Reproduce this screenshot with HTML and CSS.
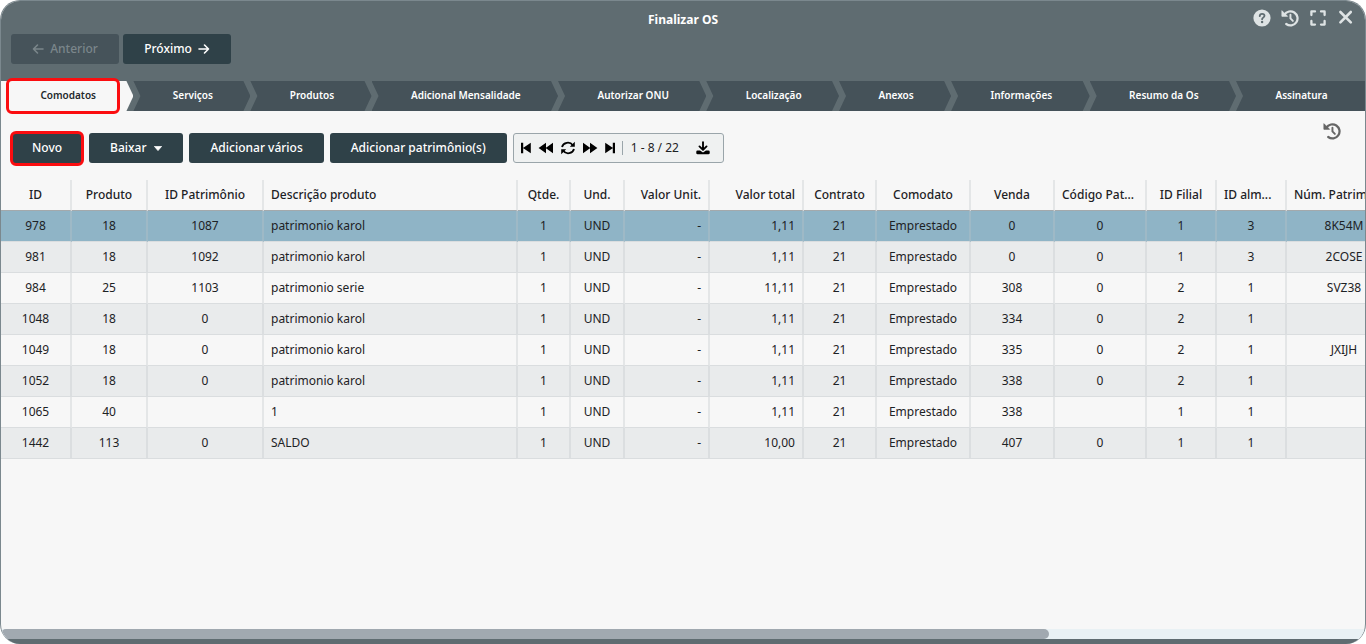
FILE: index.html
```html
<!DOCTYPE html>
<html lang="pt-BR">
<head>
<meta charset="utf-8">
<meta name="viewport" content="width=device-width, initial-scale=1">
<title>Finalizar OS</title>
<link rel="stylesheet" href="styles.css">
</head>
<body>
<svg class="sprite" aria-hidden="true">
  <symbol id="history" viewBox="0 0 24 24"><path d="M4.6 7.6A9.4 9.4 0 1 1 7 20" fill="none" stroke="currentColor" stroke-width="3" stroke-linecap="round"/><path d="M1.2 2.2v7.6h7.6z" fill="currentColor" stroke="currentColor" stroke-linejoin="round"/><path d="M12.6 7.6v5l3.2 3.2" fill="none" stroke="currentColor" stroke-width="2.6" stroke-linecap="round"/></symbol>
</svg>
<main class="window">
  <header class="header">
    <div class="titlebar">
      <h1 class="title">Finalizar OS</h1>
      <div class="window-actions">
        <button class="icon-button" aria-label="Ajuda"><svg class="icon" viewBox="0 0 18 18"><circle cx="9" cy="9" r="8.6" fill="currentColor"/><path d="M6.7 7.1c.1-1.5 1-2.3 2.4-2.3 1.5 0 2.4.8 2.4 2 0 1.8-2.4 1.8-2.4 3.4" fill="none" stroke="#5f6c71" stroke-width="1.8" stroke-linecap="round"/><circle cx="9.1" cy="13" r="1.2" fill="#5f6c71"/></svg></button>
        <button class="icon-button" aria-label="Histórico"><svg class="icon"><use href="#history"/></svg></button>
        <button class="icon-button" aria-label="Tela cheia"><svg class="icon" viewBox="0 0 18 18"><path d="M2.4 6V2.4H6M12 2.4h3.6V6M15.6 12v3.6H12M6 15.6H2.4V12" fill="none" stroke="currentColor" stroke-width="2.3" stroke-linecap="round" stroke-linejoin="round"/></svg></button>
        <button class="icon-button" aria-label="Fechar"><svg class="icon" viewBox="0 0 18 18"><path d="M3.4 3l10.4 10.4M13.8 3L3.4 13.4" stroke="currentColor" stroke-width="2.6" stroke-linecap="round"/></svg></button>
      </div>
    </div>
    <div class="steps-nav">
      <button class="button step-button" disabled><svg class="arrow" viewBox="0 0 12 12"><path d="M11 6H1.5M5.5 2l-4 4 4 4" /></svg>Anterior</button>
      <button class="button step-button">Próximo<svg class="arrow" viewBox="0 0 12 12"><path d="M1 6h9.5M6.5 2l4 4-4 4"/></svg></button>
    </div>
    <nav>
      <ul class="tabs">
        <li class="tab-item tab-item-current"><button class="tab">Comodatos</button></li>
        <li class="tab-item"><button class="tab">Serviços</button></li>
        <li class="tab-item"><button class="tab">Produtos</button></li>
        <li class="tab-item"><button class="tab">Adicional Mensalidade</button></li>
        <li class="tab-item"><button class="tab">Autorizar ONU</button></li>
        <li class="tab-item"><button class="tab">Localização</button></li>
        <li class="tab-item"><button class="tab">Anexos</button></li>
        <li class="tab-item"><button class="tab">Informações</button></li>
        <li class="tab-item"><button class="tab">Resumo da Os</button></li>
        <li class="tab-item tab-item-last"><button class="tab">Assinatura</button></li>
      </ul>
    </nav>
  </header>
  <section class="content">
    <div class="toolbar">
      <button class="button button-new">Novo</button>
      <button class="button">Baixar<svg class="caret" viewBox="0 0 8 5"><path d="M.4.4h7.2L4 4.6z" fill="currentColor" stroke="currentColor" stroke-width=".8" stroke-linejoin="round"/></svg></button>
      <button class="button">Adicionar vários</button>
      <button class="button">Adicionar patrimônio(s)</button>
      <div class="pager">
        <button class="pager-button" aria-label="Primeira página"><svg class="pager-icon" viewBox="0 0 12 12"><path d="M1 .8h2.2v10.4H1zM10.8.8v10.4L3 6z" fill="currentColor"/></svg></button>
        <button class="pager-button" aria-label="Página anterior"><svg class="pager-icon pager-icon-wide" viewBox="0 0 16 12"><path d="M8 .8v10.4L.6 6zM15 .8v10.4L7.6 6z" fill="currentColor"/></svg></button>
        <button class="pager-button" aria-label="Atualizar"><svg class="pager-icon pager-icon-wide" viewBox="0 0 16 14"><path d="M2 6a6 5.6 0 0 1 10.8-1.8M14 8A6 5.6 0 0 1 3.2 9.8" fill="none" stroke="currentColor" stroke-width="1.8"/><path d="M14.8.8v5H9.8zM1.2 13.2v-5h5z" fill="currentColor"/></svg></button>
        <button class="pager-button" aria-label="Próxima página"><svg class="pager-icon pager-icon-wide" viewBox="0 0 16 12"><path d="M1 .8v10.4L8.4 6zM8 .8v10.4L15.4 6z" fill="currentColor"/></svg></button>
        <button class="pager-button" aria-label="Última página"><svg class="pager-icon" viewBox="0 0 12 12"><path d="M11 .8H8.8v10.4H11zM1.2.8v10.4L9 6z" fill="currentColor"/></svg></button>
        <span class="pager-range">1 - 8 / 22</span>
        <button class="pager-button" aria-label="Exportar"><svg class="pager-icon pager-icon-wide" viewBox="0 0 16 15"><path d="M8 1.2v8M4.2 5.8L8 9.6l3.8-3.8" fill="none" stroke="currentColor" stroke-width="2" stroke-linecap="round" stroke-linejoin="round"/><path d="M2.2 10.2h2.6L8 12.4l3.2-2.2h2.6a1.4 1.4 0 0 1 1.4 1.4v1.2a1.4 1.4 0 0 1-1.4 1.4H2.2a1.4 1.4 0 0 1-1.4-1.4v-1.2a1.4 1.4 0 0 1 1.4-1.4z" fill="currentColor"/></svg></button>
      </div>
      <button class="icon-button history-button" aria-label="Histórico de registros"><svg class="icon"><use href="#history"/></svg></button>
    </div>
    <div class="table-area">
      <table class="grid">
        <colgroup><col class="w71"><col class="w76"><col class="w116"><col class="w254"><col class="w53"><col class="w54"><col class="w85"><col class="w94"><col class="w73"><col class="w94"><col class="w84"><col class="w92"><col class="w70"><col class="w70"><col class="w116"></colgroup>
        <thead><tr><th>ID</th><th>Produto</th><th>ID Patrimônio</th><th class="left">Descrição produto</th><th>Qtde.</th><th>Und.</th><th class="right">Valor Unit.</th><th class="right">Valor total</th><th>Contrato</th><th>Comodato</th><th>Venda</th><th class="left">Código Pat...</th><th>ID Filial</th><th class="left">ID alm...</th><th class="left">Núm. Patrimônio</th></tr></thead>
        <tbody>
          <tr class="selected"><td>978</td><td>18</td><td>1087</td><td class="left">patrimonio karol</td><td>1</td><td>UND</td><td class="right">-</td><td class="right">1,11</td><td>21</td><td>Emprestado</td><td>0</td><td>0</td><td>1</td><td>3</td><td>8K54M</td></tr>
          <tr><td>981</td><td>18</td><td>1092</td><td class="left">patrimonio karol</td><td>1</td><td>UND</td><td class="right">-</td><td class="right">1,11</td><td>21</td><td>Emprestado</td><td>0</td><td>0</td><td>1</td><td>3</td><td>2COSE</td></tr>
          <tr><td>984</td><td>25</td><td>1103</td><td class="left">patrimonio serie</td><td>1</td><td>UND</td><td class="right">-</td><td class="right">11,11</td><td>21</td><td>Emprestado</td><td>308</td><td>0</td><td>2</td><td>1</td><td>SVZ38</td></tr>
          <tr><td>1048</td><td>18</td><td>0</td><td class="left">patrimonio karol</td><td>1</td><td>UND</td><td class="right">-</td><td class="right">1,11</td><td>21</td><td>Emprestado</td><td>334</td><td>0</td><td>2</td><td>1</td><td></td></tr>
          <tr><td>1049</td><td>18</td><td>0</td><td class="left">patrimonio karol</td><td>1</td><td>UND</td><td class="right">-</td><td class="right">1,11</td><td>21</td><td>Emprestado</td><td>335</td><td>0</td><td>2</td><td>1</td><td>JXIJH</td></tr>
          <tr><td>1052</td><td>18</td><td>0</td><td class="left">patrimonio karol</td><td>1</td><td>UND</td><td class="right">-</td><td class="right">1,11</td><td>21</td><td>Emprestado</td><td>338</td><td>0</td><td>2</td><td>1</td><td></td></tr>
          <tr><td>1065</td><td>40</td><td></td><td class="left">1</td><td>1</td><td>UND</td><td class="right">-</td><td class="right">1,11</td><td>21</td><td>Emprestado</td><td>338</td><td></td><td>1</td><td>1</td><td></td></tr>
          <tr><td>1442</td><td>113</td><td>0</td><td class="left">SALDO</td><td>1</td><td>UND</td><td class="right">-</td><td class="right">10,00</td><td>21</td><td>Emprestado</td><td>407</td><td>0</td><td>1</td><td>1</td><td></td></tr>
        </tbody>
      </table>
    </div>
    <div class="scroll-track"><div class="scroll-thumb"></div></div>
  </section>
</main>
</body>
</html>
```
FILE: styles.css
```css
* { box-sizing: border-box; }
body {
  margin: 0;
  background: #fff;
  color: #1d2225;
  font: 12px/18px "Noto Sans", "Open Sans", sans-serif;
}
button {
  margin: 0;
  padding: 0;
  border: 0;
  background: none;
  color: inherit;
  font: inherit;
}
svg { display: block; }
.sprite { position: absolute; width: 0; height: 0; }

.window {
  display: flex;
  flex-direction: column;
  min-height: 100vh;
  border: solid #7b888e;
  border-width: 1px 1px 0;
  border-radius: 20px;
  background: #f7f7f7;
  overflow: hidden;
}

/* Header */
.header { background: #5f6c71; color: #fff; }
.titlebar {
  display: grid;
  grid-template-columns: 1fr auto 1fr;
  align-items: center;
  height: 33px;
  padding: 0 10px;
}
.title {
  grid-column: 2;
  margin: 0;
  padding-top: 4px;
  font-size: 12px;
  font-weight: 700;
}
.window-actions {
  display: flex;
  justify-content: flex-end;
  gap: 10px;
  color: #dee3e4;
}
.icon { width: 18px; height: 18px; }
.steps-nav { display: flex; gap: 4px; padding: 0 10px; }
.button {
  display: flex;
  align-items: center;
  justify-content: center;
  gap: 8px;
  height: 30px;
  padding: 0 21px;
  border-radius: 3px;
  background: #2f4148;
  color: #fff;
  font-weight: 500;
  white-space: nowrap;
}
.step-button { min-width: 108px; gap: 6px; padding: 0 20px; }
.step-button:disabled { background: #46535a; color: #7b868b; }
.arrow {
  width: 12px;
  height: 12px;
  fill: none;
  stroke: currentColor;
  stroke-width: 1.6;
  stroke-linecap: round;
  stroke-linejoin: round;
}

/* Step tabs */
.tabs {
  display: flex;
  margin: 0;
  padding: 17px 0 0;
  list-style: none;
}
.tab-item { position: relative; flex: 1 0 auto; }
.tab {
  width: 100%;
  height: 30px;
  padding: 0 37px 2px 39px;
  background: #455259;
  clip-path: polygon(0 0, calc(100% - 7px) 0, 100% 50%, calc(100% - 7px) 100%, 0 100%, 7px 50%);
  font-size: 10px;
  font-weight: 600;
  white-space: nowrap;
}
.tab-item-current .tab {
  background: #f7f7f7;
  color: #23292c;
  clip-path: polygon(0 0, calc(100% - 7px) 0, 100% 50%, calc(100% - 7px) 100%, 0 100%);
}
.tab-item-last .tab { clip-path: polygon(0 0, 100% 0, 100% 100%, 0 100%, 7px 50%); }
.tab-item-current::after {
  content: "";
  position: absolute;
  inset: -3px 13px -3px 5px;
  border: 3px solid #fb0d10;
  border-radius: 6px;
}

/* Toolbar */
.content { display: flex; flex: 1; flex-direction: column; }
.toolbar {
  display: flex;
  gap: 6px;
  padding: 22px 24px 17px 10px;
}
.button-new { position: relative; }
.button-new::after {
  content: "";
  position: absolute;
  inset: -2px -1px -3px;
  border: 3px solid #fb0d10;
  border-radius: 6px;
}
.caret { width: 8px; height: 5px; }
.pager {
  display: flex;
  align-items: center;
  gap: 6px;
  height: 30px;
  padding: 0 12px 0 6px;
  border: 1px solid #9aa5aa;
  border-radius: 3px;
  background: #eff1f1;
  color: #000;
}
.pager-icon { width: 12px; height: 12px; }
.pager-icon-wide { width: 16px; height: 14px; }
.pager-range {
  margin-right: 10px;
  padding-left: 8px;
  border-left: 1px solid #9aa5aa;
  color: #1d2225;
  line-height: 14px;
  white-space: nowrap;
}
.history-button { margin-left: auto; margin-top: -11px; align-self: flex-start; color: #666; }

/* Records table */
.table-area { flex: 1; overflow: hidden; }
.grid {
  width: 1402px;
  table-layout: fixed;
  border-collapse: separate;
  border-spacing: 0;
}
th, td {
  height: 31px;
  padding: 0 7px;
  border-right: 2px solid rgba(190, 196, 199, .32);
  border-bottom: 1px solid #dadddf;
  text-align: center;
  white-space: nowrap;
  overflow: hidden;
}
th { border-bottom-color: #a3a9ac; font-weight: 500; }
tbody tr:nth-child(even) { background: #e9ebec; }
tbody .selected { background: #8fb4c6; }
.left { text-align: left; }
.right { text-align: right; }
.w53 { width: 53px; }
.w54 { width: 54px; }
.w70 { width: 70px; }
.w71 { width: 71px; }
.w73 { width: 73px; }
.w76 { width: 76px; }
.w84 { width: 84px; }
.w85 { width: 85px; }
.w92 { width: 92px; }
.w94 { width: 94px; }
.w116 { width: 116px; }
.w254 { width: 254px; }

/* Horizontal scroll bar and footer edge */
.scroll-track { background: #e9f1f4; border-bottom: 5px solid #5f6c71; }
.scroll-thumb {
  width: 76.8%;
  height: 10px;
  border-radius: 5px;
  background: #a1a9b0;
}
```
